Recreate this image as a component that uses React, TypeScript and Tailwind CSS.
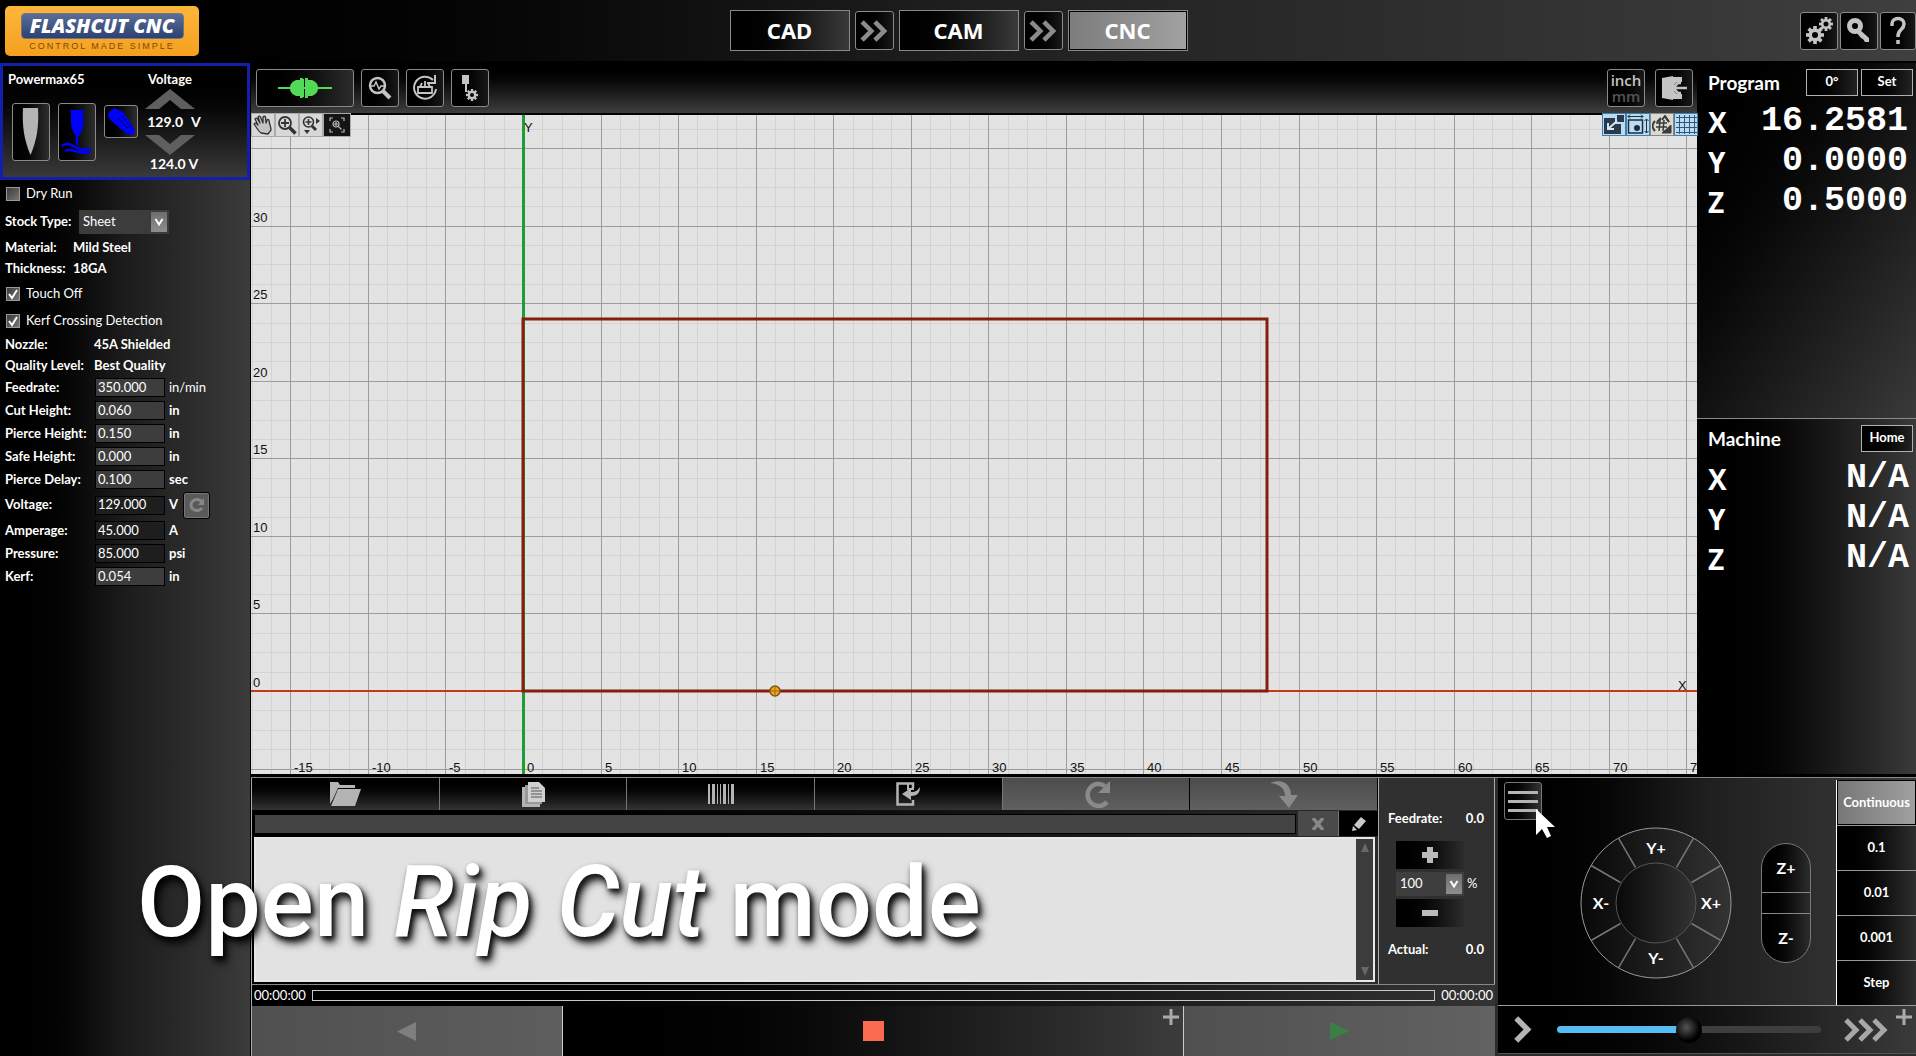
import React from "react";

const ORIGIN_X = 272;
const ORIGIN_Y = 576;
const UNIT = 15.51;

const toX = (u: number) => Math.round(ORIGIN_X + u * UNIT);
const toY = (u: number) => Math.round(ORIGIN_Y - u * UNIT);
const range = (a: number, b: number) => Array.from({ length: b - a + 1 }, (_, i) => a + i);

function Plot() {
  const right = toX(76);
  const cols = range(-14, 75);
  const rows = range(-4, 29);
  return (
    <svg className="block min-h-0 w-full flex-1 bg-[#e3e3e3]" height="659" role="img" aria-label="Work area">
      <g shapeRendering="crispEdges">
        {cols.filter((i) => i % 4 !== 0).map((i) => (
          <line key={i} x1={toX(i * 1.25)} x2={toX(i * 1.25)} y1="0" y2="100%" stroke="#d3d3d3" />
        ))}
        {rows.filter((i) => i % 4 !== 0).map((i) => (
          <line key={i} x1="0" x2="100%" y1={toY(i * 1.25)} y2={toY(i * 1.25)} stroke="#d3d3d3" />
        ))}
        {cols.filter((i) => i % 4 === 0).map((i) => (
          <line key={i} x1={toX(i * 1.25)} x2={toX(i * 1.25)} y1="0" y2="100%" stroke="#9c9c9c" />
        ))}
        {rows.filter((i) => i % 4 === 0).map((i) => (
          <line key={i} x1="0" x2="100%" y1={toY(i * 1.25)} y2={toY(i * 1.25)} stroke="#9c9c9c" />
        ))}
        <line x1="0" x2="100%" y1={ORIGIN_Y} y2={ORIGIN_Y} stroke="#c23a1a" strokeWidth="2" />
        <line x1={ORIGIN_X} x2={ORIGIN_X} y1="0" y2="100%" stroke="#1e9c36" strokeWidth="3" />
      </g>
      <rect x={toX(0)} y={toY(24)} width={toX(48) - toX(0)} height={toY(0) - toY(24)} fill="none" stroke="#841f0c" strokeWidth="3" />
      <circle cx={toX(16.2581)} cy={ORIGIN_Y} r="5" fill="#f2a516" stroke="#7a5510" strokeWidth="1.5" />
      <path d={`M${toX(16.2581) - 5} ${ORIGIN_Y}h10M${toX(16.2581)} ${ORIGIN_Y - 5}v10`} stroke="#a06a10" />
      <g fontFamily="Liberation Sans, Arial, sans-serif" fontSize="13" fill="#111">
        {range(-3, 15).map((i) => (
          <text key={i} x={toX(i * 5) + 4} y="657">{i * 5}</text>
        ))}
        {range(0, 6).map((i) => (
          <text key={i} x="2" y={toY(i * 5) - 4}>{i * 5}</text>
        ))}
        <text x={ORIGIN_X + 1} y="17">Y</text>
        <text x={right - 24} y="575">X</text>
      </g>
    </svg>
  );
}

function Gear({ cx, cy, r, hole }: { cx: number; cy: number; r: number; hole: number }) {
  return (
    <g>
      {range(0, 7).map((i) => (
        <rect key={i} x={cx - r * 0.2} y={cy - r} width={r * 0.4} height={r * 0.5} fill="currentColor" transform={`rotate(${i * 45} ${cx} ${cy})`} />
      ))}
      <circle cx={cx} cy={cy} r={(r * 0.72 + hole) / 2} fill="none" stroke="currentColor" strokeWidth={r * 0.72 - hole} />
    </g>
  );
}

const iconBtn =
  "flex items-center justify-center rounded-[3px] border border-[#8a8a8a] bg-gradient-to-r from-black to-[#181818] text-[#c4c4c4]";

function Chevrons({ n, className }: { n: number; className: string }) {
  return (
    <svg className={className} viewBox={`0 0 ${2 + n * 14} 24`} fill="none" stroke="currentColor" strokeWidth="5">
      {range(0, n - 1).map((i) => (
        <path key={i} d={`M${2 + i * 14} 2l10 10l-10 10`} />
      ))}
    </svg>
  );
}

function Header() {
  const mode = "flex h-[41px] w-[120px] items-center justify-center border border-[#888] font-['Noto_Sans'] text-[22px] font-bold text-white";
  return (
    <header className="flex h-[62px] shrink-0 items-center border-b border-black bg-gradient-to-r from-black via-[#1f1f1f] to-[#3f3f3f]">
      <div className="flex flex-1 pl-[5px]">
        <div className="flex h-[50px] w-[194px] flex-col items-center rounded-[5px] bg-gradient-to-b from-[#fdb63a] to-[#f5a01e] pt-[7px]">
          <div className="flex h-[26px] w-[163px] items-center justify-center rounded-[4px] border border-[#6d7488] bg-gradient-to-b from-[#5b6e96] to-[#2c4172] font-['Open_Sans'] text-xl font-extrabold italic text-white">
            FLASHCUT CNC
          </div>
          <div className="font-['Liberation_Sans'] text-[9px] leading-[15px] tracking-[2px] text-[#7a4a10]">CONTROL MADE SIMPLE</div>
        </div>
      </div>
      <nav className="flex items-center gap-[5px]">
        <button className={`${mode} bg-gradient-to-r from-black to-[#3a3a3a]`}>CAD</button>
        <button className={`${iconBtn} h-[39px] w-[39px]`} aria-label="Send to CAM"><Chevrons n={2} className="h-[22px] w-[28px] text-[#8c8c8c]" /></button>
        <button className={`${mode} bg-gradient-to-r from-black to-[#3a3a3a]`}>CAM</button>
        <button className={`${iconBtn} h-[39px] w-[39px]`} aria-label="Send to CNC"><Chevrons n={2} className="h-[22px] w-[28px] text-[#8c8c8c]" /></button>
        <button className={`${mode} bg-gradient-to-r from-[#7c7c7c] to-[#a2a2a2] ring-1 ring-inset ring-black`}>CNC</button>
      </nav>
      <div className="flex flex-1 justify-end gap-[2px] overflow-hidden pl-1">
        <button className={`${iconBtn} h-[38px] w-[38px]`} aria-label="Settings">
          <svg width="30" height="30" viewBox="0 0 30 30"><Gear cx={11} cy={19} r={9} hole={3} /><Gear cx={22} cy={8} r={7} hole={2.5} /></svg>
        </button>
        <button className={`${iconBtn} h-[38px] w-[38px]`} aria-label="License">
          <svg width="26" height="26" viewBox="0 0 26 26"><circle cx="9" cy="8" r="5.500" fill="none" stroke="currentColor" strokeWidth="5" /><path d="M10 14l3-3l10 9v4h-4l-2-3l-2-1z" fill="currentColor" /></svg>
        </button>
        <button className={`${iconBtn} h-[38px] w-[36px]`} aria-label="Help">
          <svg width="22" height="30" viewBox="0 0 22 30" fill="none" stroke="currentColor" strokeWidth="3.500"><path d="M5 10V8a6 5.500 0 0 1 12 0c0 6-6 5-6 12v1M11 24v4" /></svg>
        </button>
      </div>
    </header>
  );
}

function Check({ label, checked }: { label: string; checked?: boolean }) {
  return (
    <label className="flex h-[27px] items-center gap-[6px] font-normal">
      <span className="relative h-[14px] w-[14px]">
        <input type="checkbox" defaultChecked={checked} className="peer block h-[14px] w-[14px] appearance-none border border-[#999] bg-gradient-to-br from-[#3c3c3c] to-[#777]" />
        <svg viewBox="0 0 14 14" className="pointer-events-none absolute inset-0 hidden peer-checked:block" fill="none" stroke="#fff" strokeWidth="2"><path d="M3 7l3 4l5-8" /></svg>
      </span>
      {label}
    </label>
  );
}

function Arrow() {
  return (
    <span className="pointer-events-none absolute top-[2px] right-[2px] bottom-[2px] flex w-4 items-center justify-center bg-gradient-to-b from-[#6e6e6e] to-[#8e8e8e]">
      <svg width="10" height="8" viewBox="0 0 10 8" fill="none" stroke="#fff" strokeWidth="2"><path d="M1.500 1L5 6.500L8.500 1" /></svg>
    </span>
  );
}

type FieldProps = { label: string; value: string; unit: string; dark?: boolean; light?: boolean; children?: React.ReactNode; tall?: boolean };

function Field({ label, value, unit, dark, light, tall, children }: FieldProps) {
  return (
    <div className={`flex items-center ${tall ? "h-7" : "h-[23px]"}`}>
      <label className="flex items-center">
        <span className="w-[90px]">{label}</span>
        <input defaultValue={value} className={`h-[19px] w-[70px] border border-black px-[2px] font-normal ${dark ? "bg-[#1e1e1e]" : "bg-[#3d3d3d]"}`} />
      </label>
      <span className={`ml-[4px] ${light ? "font-normal" : ""}`}>{unit}</span>
      {children}
    </div>
  );
}

function Sidebar() {
  const tool = "flex items-center justify-center rounded-[3px] border border-[#8a8a8a] bg-gradient-to-r from-black to-[#2e2e2e]";
  return (
    <aside className="w-[250px] shrink-0 bg-gradient-to-r from-black via-[#1c1c1c] to-[#3b3b3b] text-[13px] font-bold text-white">
      <section className="flex h-[117px] justify-between border-3 border-[#1220a8] bg-gradient-to-b from-black to-[#3a3a3a] pr-[47px] pl-[5px]">
        <div className="pt-[3px]">
          <h2 className="leading-5">Powermax65</h2>
          <div className="mt-[14px] ml-[4px] flex gap-2">
            <button className={`${tool} h-[58px] w-[38px]`} aria-label="Torch">
              <svg width="18" height="48" viewBox="0 0 18 48"><path d="M1 0h15c1 18-1 32-7.500 47C2 32 0 18 1 0z" fill="#b4b4b4" /></svg>
            </button>
            <button className={`${tool} h-[58px] w-[38px]`} aria-label="Arc">
              <svg width="32" height="46" viewBox="0 0 32 46" fill="#0000ff"><path d="M9 1h14l-1 2c1 12 0 19-4 24h-3c-4-5-6-12-5-24z" /><path d="M16 26v10M1 37c5-5 12 0 15 2s8 2 14 1M4 42c5-3 8 0 13 1s8 1 12 0" fill="none" stroke="#0000ff" strokeWidth="2.500" /></svg>
            </button>
            <button className={`${tool} mt-[2px] h-[33px] w-[34px]`} aria-label="Torch angle">
              <svg width="30" height="30" viewBox="0 0 30 30" fill="#0000ff"><path d="M2 6l6-5l9 4l11 16c2 5-2 8-7 6L9 17C4 13 2 10 2 6z" /><path d="M12 11l11 12M16 9l9 12" stroke="#000050" strokeWidth="1.500" strokeDasharray="2 2" /></svg>
            </button>
          </div>
        </div>
        <div className="flex w-[60px] flex-col items-center pt-[3px] whitespace-nowrap">
          <h2 className="leading-5">Voltage</h2>
          <button aria-label="Raise voltage"><svg width="50" height="20" viewBox="0 0 50 20"><path d="M0 20L25 0l25 20H36L25 11L14 20z" fill="#5f5f5f" /></svg></button>
          <output className="flex h-[26px] items-center gap-2 pl-2 text-sm">129.0 <span>V</span></output>
          <button aria-label="Lower voltage"><svg width="50" height="20" viewBox="0 0 50 20"><path d="M0 0l25 20L50 0H36L25 9L14 0z" fill="#5f5f5f" /></svg></button>
          <output className="pl-2 text-sm leading-[18px]">124.0 V</output>
        </div>
      </section>
      <div className="px-[6px]"><Check label="Dry Run" /></div>
      <div className="pl-[5px]">
        <label className="flex h-[30px] items-center">
          <span className="w-[74px]">Stock Type:</span>
          <span className="relative">
            <select className="h-[24px] w-[90px] appearance-none border-0 bg-[#3c3c3c] px-1 font-normal"><option>Sheet</option></select>
            <Arrow />
          </span>
        </label>
        <dl className="grid grid-cols-[68px_1fr] leading-[21px]">
          <dt>Material:</dt><dd>Mild Steel</dd>
          <dt>Thickness:</dt><dd>18GA</dd>
        </dl>
        <div className="pl-[1px] pt-[1px]">
          <Check label="Touch Off" checked />
          <Check label="Kerf Crossing Detection" checked />
        </div>
        <dl className="grid grid-cols-[89px_1fr] leading-[21px] whitespace-nowrap">
          <dt>Nozzle:</dt><dd>45A Shielded</dd>
          <dt>Quality Level:</dt><dd>Best Quality</dd>
        </dl>
        <Field label="Feedrate:" value="350.000" unit="in/min" light />
        <Field label="Cut Height:" value="0.060" unit="in" />
        <Field label="Pierce Height:" value="0.150" unit="in" />
        <Field label="Safe Height:" value="0.000" unit="in" />
        <Field label="Pierce Delay:" value="0.100" unit="sec" />
        <Field label="Voltage:" value="129.000" unit="V" dark tall>
          <button className="ml-[5px] flex h-[27px] w-[27px] items-center justify-center rounded-[3px] border border-black bg-[#5a5a5a] ring-1 ring-[#777] ring-inset" aria-label="Reset voltage">
            <svg width="16" height="16" viewBox="0 0 16 16" fill="none" stroke="#888" strokeWidth="3"><path d="M13 11a6 5.500 0 1 1 0-6" /><path d="M15 1v7h-6z" fill="#888" stroke="none" /></svg>
          </button>
        </Field>
        <Field label="Amperage:" value="45.000" unit="A" dark />
        <Field label="Pressure:" value="85.000" unit="psi" dark />
        <Field label="Kerf:" value="0.054" unit="in" />
      </div>
    </aside>
  );
}

function Toolbar() {
  const sm = "flex h-[22px] w-[22px] items-center justify-center bg-[#d8d8d8] text-[#333]";
  const sq = "flex h-[23px] w-[24px] items-center justify-center border border-[#3f7fae] bg-[#b9dcf3] text-[#1c2c3c]";
  return (
    <div className="relative flex h-[52px] shrink-0 items-center justify-between border-b-2 border-black bg-gradient-to-b from-black via-[#141414] to-[#3e3e3e] pr-1 pl-[5px]">
      <div className="flex gap-[7px]">
        <button className="flex h-[38px] w-[98px] items-center justify-center rounded-[3px] border border-[#8a8a8a] bg-gradient-to-r from-black to-[#2c2c2c]" aria-label="Connection">
          <svg width="54" height="22" viewBox="0 0 54 22" fill="#52d957"><path d="M0 10h54v2H0z" /><path d="M22 1h3v1h1v18h-1v1h-3v-2h-4c-4-2-6-4-6-8s2-6 6-8h4zM27 1h3v2h4c4 2 6 4 6 8s-2 6-6 8h-4v2h-3v-1z" /></svg>
        </button>
        <button className={`${iconBtn} h-[38px] w-[38px]`} aria-label="Diagnostics">
          <svg width="24" height="24" viewBox="0 0 24 24" fill="none" stroke="currentColor"><circle cx="9.500" cy="9.500" r="7.500" strokeWidth="2.500" /><path d="M15 15l7 7" strokeWidth="4" /><path d="M3 10h3l2-4l3 7l2-3h3" strokeWidth="1.500" /></svg>
        </button>
        <button className={`${iconBtn} h-[38px] w-[38px]`} aria-label="Redo job">
          <svg width="26" height="26" viewBox="0 0 26 26" fill="none" stroke="currentColor"><path d="M21 5a11 11 0 1 0 3 9" strokeWidth="2" /><path d="M23 0v8h-8" strokeWidth="2" /><path d="M6 12h14v6H6zM8 12l2-4M18 12l-2-4M13 6v6" strokeWidth="1.800" /></svg>
        </button>
        <button className={`${iconBtn} h-[38px] w-[38px]`} aria-label="Torch setup">
          <svg width="20" height="28" viewBox="0 0 20 28" fill="currentColor"><path d="M2 1h7v9H7v8H5v-8H2z" /><Gear cx={12} cy={21} r={6} hole={2} /></svg>
        </button>
      </div>
      <div className="flex gap-[10px]">
        <button className={`${iconBtn} h-[38px] w-[38px] flex-col font-['Open_Sans'] text-[15px] leading-4 font-semibold`}>
          <span>inch</span><span className="text-[#555]">mm</span>
        </button>
        <button className={`${iconBtn} h-[38px] w-[38px]`} aria-label="Clamp">
          <svg width="26" height="26" viewBox="0 0 26 26" fill="currentColor"><path d="M1 3l11-2v24L1 23z" /><path d="M12 2h9v5h-5l-3 3v6l3 3h5v5h-9z" /><path d="M20 8h-3l-3 3v4l3 3h3M15 13h11" fill="none" stroke="currentColor" strokeWidth="2.500" /></svg>
        </button>
      </div>
      <div className="absolute top-[50px] left-0 z-10 flex gap-[2px] border border-[#aaa] bg-[#aaa]">
        <button className={sm} aria-label="Pan">
          <svg width="20" height="20" viewBox="0 0 20 20" fill="#c4c4c4" stroke="currentColor" strokeWidth="1.300" strokeLinejoin="round"><path d="M8 18C5 16 4 13 1 9c1-1.500 2-1 4 1L2 4c1-1.500 2-1 2.500 0L7 8L5 2c1-1.500 2-1 2.500 0L10 8V2c1-1 2-1 2.500 0L13 8l1-3c1-1 2-.5 2 1c1 5 2 6 2 9l-3 4z" /></svg>
        </button>
        <button className={sm} aria-label="Zoom">
          <svg width="20" height="20" viewBox="0 0 20 20" fill="none" stroke="currentColor" strokeWidth="1.800"><circle cx="8" cy="8" r="6" /><path d="M8 4v8M4 8h8" /><path d="M12.500 12.500l6 6" strokeWidth="3.500" /></svg>
        </button>
        <button className={sm} aria-label="Zoom window">
          <svg width="20" height="20" viewBox="0 0 20 20" fill="none" stroke="currentColor" strokeWidth="1.600"><circle cx="7.500" cy="7" r="5" /><path d="M7.500 4v6M4.500 7h6" /><path d="M11 11l4 4" strokeWidth="3" /><path d="M15 3l4 3l-4 3zM3 15h6l-3 4z" fill="currentColor" stroke="none" /></svg>
        </button>
        <button className="flex h-[22px] w-[26px] items-center justify-center bg-[#141414] text-[#bbb]" aria-label="Zoom to fit">
          <svg width="16" height="16" viewBox="0 0 16 16" fill="none" stroke="currentColor" strokeWidth="1.200"><circle cx="7" cy="7" r="3" /><path d="M7 5v4M5 7h4M9.500 9.500l3 3M1 4V1h3M12 1h3v3M1 12v3h3M12 15h3v-3" /></svg>
        </button>
      </div>
      <div className="absolute top-[50px] -right-px z-10 flex">
        <button className={sq} aria-label="Jump"><svg width="22" height="21" viewBox="0 0 22 21"><path d="M1 4h11v6h6v10H1z" fill="#2b3948" /><rect x="14" y="1" width="7" height="7" fill="#2b3948" /><path d="M14 7l-9 8M5 9v6h6" stroke="#cfe8f8" strokeWidth="2" fill="none" /></svg></button>
        <button className={sq} aria-label="Extents"><svg width="22" height="21" viewBox="0 0 22 21" fill="none" stroke="currentColor" strokeWidth="1.500"><rect x="1.500" y="6" width="14" height="13" /><path d="M1 2.500h15M19.500 5v14M3 .5L1 2.500l2 2M14 .5l2 2l-2 2M17.500 7l2-2l2 2M17.500 17l2 2l2-2" strokeWidth="1" /><circle cx="10" cy="14" r="3" fill="currentColor" stroke="none" /></svg></button>
        <button className="flex h-[23px] w-[24px] items-center justify-center border border-[#888] bg-[#dcd8d2] text-[#3a3a3a]" aria-label="Snap"><svg width="20" height="20" viewBox="0 0 20 20" fill="none" stroke="currentColor"><path d="M3 6c-3 3-3 7 0 10M10 5L13 1l4 6" strokeWidth="2" /><path d="M19 10v8h-9z" fill="currentColor" /><path d="M8 5L7 16M12 5l-1 11M4 8h11M4 12h11" strokeWidth="1.500" /><path d="M5 7l4-4M14 3l3 4" strokeWidth="2" /></svg></button>
        <button className={sq} aria-label="Grid"><svg width="22" height="21" viewBox="0 0 22 21" stroke="#2f5878"><path d="M4.500 1v19M9.500 1v19M14.500 1v19M19.500 1v19M1 3.500h21M1 8.500h21M1 13.500h21M1 18.500h21" /></svg></button>
      </div>
    </div>
  );
}

function AxisTable({ values }: { values: [string, string][] }) {
  return (
    <table className="w-full text-white">
      <tbody>
        {values.map(([axis, v]) => (
          <tr key={axis} className="h-10">
            <th scope="row" className="p-0 pt-[2px] text-left font-['Open_Sans'] text-[28px] leading-[38px] font-bold">{axis}</th>
            <td className="p-0 text-right font-['Liberation_Mono'] text-[35px] leading-10 font-bold">{v}</td>
          </tr>
        ))}
      </tbody>
    </table>
  );
}

function Positions() {
  const small = "h-[27px] w-[52px] border border-[#b0b0b0] bg-gradient-to-r from-black to-[#222] text-[13px] font-bold";
  return (
    <section className="flex w-[219px] shrink-0 flex-col bg-gradient-to-br from-black via-[#0c0c0c] to-[#333] text-white">
      <div className="h-[356px] border-b border-[#8a8a8a] bg-gradient-to-br from-black via-[#111] to-[#3a3a3a] pt-[3px] pr-[3px] pl-[11px]">
        <div className="flex h-[32px] items-center gap-[3px]">
          <h2 className="flex-1 pt-[3px] text-[19px] font-bold">Program</h2>
          <button className={small}>0°</button>
          <button className={small}>Set</button>
        </div>
        <div className="pt-[3px] pr-[5px]"><AxisTable values={[["X", "16.2581"], ["Y", "0.0000"], ["Z", "0.5000"]]} /></div>
      </div>
      <div className="flex-1 bg-gradient-to-r from-black to-[#3a3a3a] pt-[3px] pr-[3px] pl-[11px]">
        <div className="flex h-[32px] items-center">
          <h2 className="flex-1 pt-[3px] text-[19px] font-bold">Machine</h2>
          <button className={small}>Home</button>
        </div>
        <div className="pt-[4px] pr-[4px]"><AxisTable values={[["X", "N/A"], ["Y", "N/A"], ["Z", "N/A"]]} /></div>
      </div>
    </section>
  );
}

function FileBar() {
  const b = "flex flex-1 items-center justify-center border-r text-[#b4b4b4]";
  const on = "border-[#777] bg-gradient-to-b from-black to-[#333]";
  const off = "border-black bg-gradient-to-b from-[#4c4c4c] to-[#606060]";
  return (
    <div className="flex h-[32px]">
      <button className={`${b} ${on}`} aria-label="Open file"><svg width="31" height="25" viewBox="0 0 31 25" fill="currentColor"><path d="M0 22V0h8l2 3h15v3H8L3 17z" /><path d="M8 7h23l-6 17H1z" /></svg></button>
      <button className={`${b} ${on}`} aria-label="Recent files"><svg width="23" height="25" viewBox="0 0 23 25" fill="currentColor"><path d="M0 5h3v17h15v3H0z" /><path d="M3 3h3v17h14v2H3z" fill="#999" /><path d="M6 0h11l6 6v14H6z" fill="#d0d0d0" /><path d="M9 6h8M9 9h11M9 12h11M9 15h11" stroke="#555" /></svg></button>
      <button className={`${b} ${on}`} aria-label="Scan barcode"><svg width="26" height="20" viewBox="0 0 26 20" fill="currentColor"><path d="M0 0h2v20H0zM4 0h3v20H4zM9 0h1v20H9zM12 0h1v20h-1zM15 0h3v20h-3zM20 0h1v20h-1zM23 0h3v20h-3z" /></svg></button>
      <button className={`${b} ${on}`} aria-label="Import"><svg width="25" height="24" viewBox="0 0 25 24" fill="none" stroke="currentColor"><path d="M17 6V1.500H1.500v21H17V18" strokeWidth="2.500" /><path d="M12 1v6h6" strokeWidth="2" /><path d="M24 5c0 6-3 9-9 9v4l-9-6l9-6v4c5 0 7-2 9-5z" fill="currentColor" stroke="none" /></svg></button>
      <button disabled className={`${b} ${off}`} aria-label="Restart"><svg width="29" height="28" viewBox="0 0 29 28" fill="none" stroke="#8a8a8a" strokeWidth="4.500"><path d="M25 22A11 11 0 1 1 23 6" /><path d="M28 1v12H16z" fill="#8a8a8a" stroke="none" /></svg></button>
      <button disabled className={`${b} ${off}`} aria-label="Step over"><svg width="29" height="28" viewBox="0 0 29 28" fill="#8a8a8a"><path d="M1 3C14-2 22 5 22 15h7L20 28L10 16h6C16 9 11 4 1 3z" /></svg></button>
    </div>
  );
}

function ProgramPane() {
  return (
    <section className="flex min-w-0 flex-1 flex-col border-l border-[#aaa] bg-gradient-to-r from-black to-[#333] text-[13px] text-white">
      <div className="flex">
        <div className="flex min-w-0 flex-1 flex-col">
          <FileBar />
          <div className="flex h-[27px] items-center">
            <input aria-label="Current line" readOnly className="ml-[2px] h-[20px] min-w-0 flex-1 border border-black bg-[#444]" />
            <button disabled className="ml-[2px] flex h-[25px] w-[40px] items-center justify-center bg-[#4a4a4a]" aria-label="Clear"><svg width="12" height="12" viewBox="0 0 12 12" stroke="#888" strokeWidth="3.500"><path d="M1 0l10 12M11 0L1 12" /></svg></button>
            <button className="flex h-[25px] w-[40px] items-center justify-center border-l border-[#777] bg-black" aria-label="Edit"><svg width="16" height="16" viewBox="0 0 16 16" fill="#c8c8c8"><path d="M1 15l1-5l4 4zM3 9l7-8l5 4l-7 8z" /></svg></button>
          </div>
          <div className="mr-[3px] ml-[2px] flex h-[145px] border-2 border-[#e8e8e8] bg-[#e2e2e2]">
            <textarea aria-label="Program listing" readOnly className="flex-1 resize-none outline-none" />
            <div className="flex w-[17px] flex-col items-center justify-between bg-[#3c3c3c] py-1">
              <svg width="8" height="9" viewBox="0 0 8 9" fill="#686868"><path d="M4 0l4 9H0z" /></svg>
              <svg width="8" height="9" viewBox="0 0 8 9" fill="#686868"><path d="M0 0h8L4 9z" /></svg>
            </div>
          </div>
          <div className="h-[2px]" />
        </div>
        <div className="flex w-[117px] flex-col border-x border-[#aaa] bg-[#303030] pr-[10px] pl-[9px] font-bold">
          <div className="mt-[30px] flex justify-between leading-5"><span>Feedrate:</span><output>0.0</output></div>
          <button className="mt-[13px] ml-[8px] flex h-7 w-[68px] items-center justify-center bg-gradient-to-r from-black to-[#2c2c2c]" aria-label="Increase feedrate"><svg width="16" height="16" viewBox="0 0 16 16" fill="#bbb"><path d="M5 0h6v5h5v6h-5v5H5v-5H0V5h5z" /></svg></button>
          <label className="my-[3px] ml-[8px] flex items-center gap-[3px] font-normal">
            <span className="relative"><select aria-label="Feedrate override" className="block h-6 w-[68px] appearance-none bg-[#3e3e3e] px-1"><option>100</option></select><Arrow /></span>%
          </label>
          <button className="ml-[8px] flex h-7 w-[68px] items-center justify-center bg-gradient-to-r from-black to-[#2c2c2c]" aria-label="Decrease feedrate"><svg width="16" height="6" viewBox="0 0 16 6" fill="#bbb"><path d="M0 0h16v6H0z" /></svg></button>
          <div className="mt-[12px] flex justify-between leading-5"><span>Actual:</span><output>0.0</output></div>
        </div>
      </div>
      <div className="flex h-[22px] items-center gap-[6px] border-t border-[#888] px-[2px] text-[13px] whitespace-nowrap">
        <span>00:00:00</span>
        <div role="progressbar" aria-label="Progress" aria-valuenow={0} className="h-[11px] flex-1 border border-[#c8c8c8]" />
        <span>00:00:00</span>
      </div>
      <div className="grid min-h-[50px] flex-1 grid-cols-[1fr_2fr_1fr]">
        <button className="flex items-center justify-center border-r border-[#ccc] bg-gradient-to-r from-[#505050] to-[#5e5e5e]" aria-label="Step back"><svg width="20" height="19" viewBox="0 0 20 19"><path d="M0 9.500L19 0v19z" fill="#7e7e7e" /></svg></button>
        <button className="relative flex items-center justify-center border-r border-[#ccc] bg-gradient-to-r from-black to-[#3c3c3c]" aria-label="Stop">
          <span className="h-5 w-[21px] bg-[#fb6b50]" />
          <svg className="absolute top-[3px] right-1" width="16" height="16" viewBox="0 0 16 16" stroke="#aaa" strokeWidth="3"><path d="M8 0v16M0 8h16" /></svg>
        </button>
        <button className="flex items-center justify-center bg-gradient-to-r from-[#505050] to-[#626262]" aria-label="Run"><svg width="20" height="18" viewBox="0 0 20 18"><path d="M0 0l20 9L0 18z" fill="#3b7f46" /></svg></button>
      </div>
    </section>
  );
}

const spoke = (deg: number) => {
  const a = (deg * Math.PI) / 180;
  return `M${76 + 41 * Math.cos(a)} ${76 + 41 * Math.sin(a)}L${76 + 75 * Math.cos(a)} ${76 + 75 * Math.sin(a)}`;
};

function Jog() {
  return (
    <section className="flex w-[421px] shrink-0 flex-col bg-[#2b2b2b] pl-[3px] text-white">
      <div className="flex flex-1 bg-gradient-to-r from-black via-[#1f1f1f] to-[#3c3c3c] pt-[2px]">
        <div className="relative flex flex-1 items-center">
          <button className="absolute top-[2px] left-[6px] flex h-[38px] w-[38px] flex-col items-center justify-center gap-[6px] rounded-[3px] border border-[#777] bg-gradient-to-r from-black to-[#333]" aria-label="Jog menu">
            <span className="h-[3px] w-[30px] bg-[#b4b4b4]" /><span className="h-[3px] w-[30px] bg-[#b4b4b4]" /><span className="h-[3px] w-[30px] bg-[#b4b4b4]" />
          </button>
          <svg className="absolute top-[29px] left-[38px]" width="20" height="30" viewBox="0 0 20 30" fill="#fff"><path d="M0 0v26l6-6l5 9l4-2l-4-9h8z" /></svg>
          <div className="relative mt-[20px] ml-[82px] h-[152px] w-[152px]">
            <svg className="absolute inset-0" width="152" height="152" viewBox="0 0 152 152" fill="none" stroke="#9a9a9a">
              <defs><linearGradient id="hub"><stop offset="0" stopColor="#080808" /><stop offset="1" stopColor="#333" /></linearGradient></defs>
              <circle cx="76" cy="76" r="75" fill="url(#hub)" />
              <circle cx="76" cy="76" r="40" fill="url(#hub)" stroke="#555" />
              {[30, 60, 120, 150, 210, 240, 300, 330].map((d) => <path key={d} d={spoke(d)} stroke="#777" strokeWidth="1.500" />)}
            </svg>
            <div className="relative grid h-full grid-cols-[42px_68px_42px] grid-rows-[42px_68px_42px] text-base font-bold">
              <button aria-label="X- Y+" /><button>Y+</button><button aria-label="X+ Y+" />
              <button>X-</button><span /><button>X+</button>
              <button aria-label="X- Y-" /><button>Y-</button><button aria-label="X+ Y-" />
            </div>
          </div>
          <div className="mt-[20px] ml-[29px] flex h-[120px] w-[50px] flex-col overflow-hidden rounded-full border border-[#777] bg-gradient-to-r from-black to-[#2c2c2c] text-base font-bold">
            <button className="flex-1">Z+</button>
            <div className="h-[22px] border-y border-[#888]" />
            <button className="flex-1">Z-</button>
          </div>
        </div>
        <div className="grid w-[80px] grid-rows-5 border-l border-white text-[13px] font-bold">
          <button className="border border-black bg-gradient-to-r from-[#777] to-[#a0a0a0]">Continuous</button>
          {["0.1", "0.01", "0.001", "Step"].map((s) => (
            <button key={s} className="border-t border-[#999] bg-gradient-to-r from-black to-[#2e2e2e]">{s}</button>
          ))}
        </div>
      </div>
      <div className="relative mb-[2px] flex h-[49px] items-center border-y border-t-[#999] border-b-[#555] bg-gradient-to-r from-black to-[#3a3a3a] pr-[28px] pl-[16px]">
        <Chevrons n={1} className="h-[27px] w-[18px] text-[#b4b4b4]" />
        <label className="relative ml-[25px] flex h-[26px] flex-1 items-center">
          <input type="range" aria-label="Jog speed" defaultValue={50} className="peer absolute inset-0 opacity-0" />
          <span className="h-[7px] w-1/2 rounded-l-full bg-[#55bdf2]" />
          <span className="h-[7px] flex-1 rounded-r-full bg-[#3e3e3e]" />
          <span className="pointer-events-none absolute left-1/2 -ml-[13px] h-[26px] w-[26px] rounded-full bg-radial-[at_40%_40%] from-[#555] to-black to-60%" />
        </label>
        <Chevrons n={3} className="ml-[23px] h-[26px] w-[44px] text-[#a8a8a8]" />
        <svg className="absolute top-[3px] right-1" width="16" height="16" viewBox="0 0 16 16" stroke="#aaa" strokeWidth="3"><path d="M8 0v16M0 8h16" /></svg>
      </div>
    </section>
  );
}

export default function App() {
  return (
    <div className="relative flex min-h-screen flex-col overflow-hidden bg-black font-['Lato',sans-serif]">
      <Header />
      <div className="flex flex-1 pt-px">
        <Sidebar />
        <main className="flex min-w-0 flex-1 flex-col pl-px">
          <div className="flex flex-1">
            <div className="flex min-w-0 flex-1 flex-col">
              <Toolbar />
              <Plot />
            </div>
            <Positions />
          </div>
          <div className="mt-[3px] flex h-[279px] shrink-0 border-t border-[#888]">
            <ProgramPane />
            <Jog />
          </div>
        </main>
      </div>
      <p className="pointer-events-none absolute bottom-[96px] left-[137px] font-['Roboto'] text-[99px] leading-[116px] font-medium whitespace-nowrap text-white [text-shadow:4px_6px_8px_rgba(0,0,0,0.9),2px_3px_4px_rgba(0,0,0,0.7)]">
        Open <em>Rip Cut</em> mode
      </p>
    </div>
  );
}
